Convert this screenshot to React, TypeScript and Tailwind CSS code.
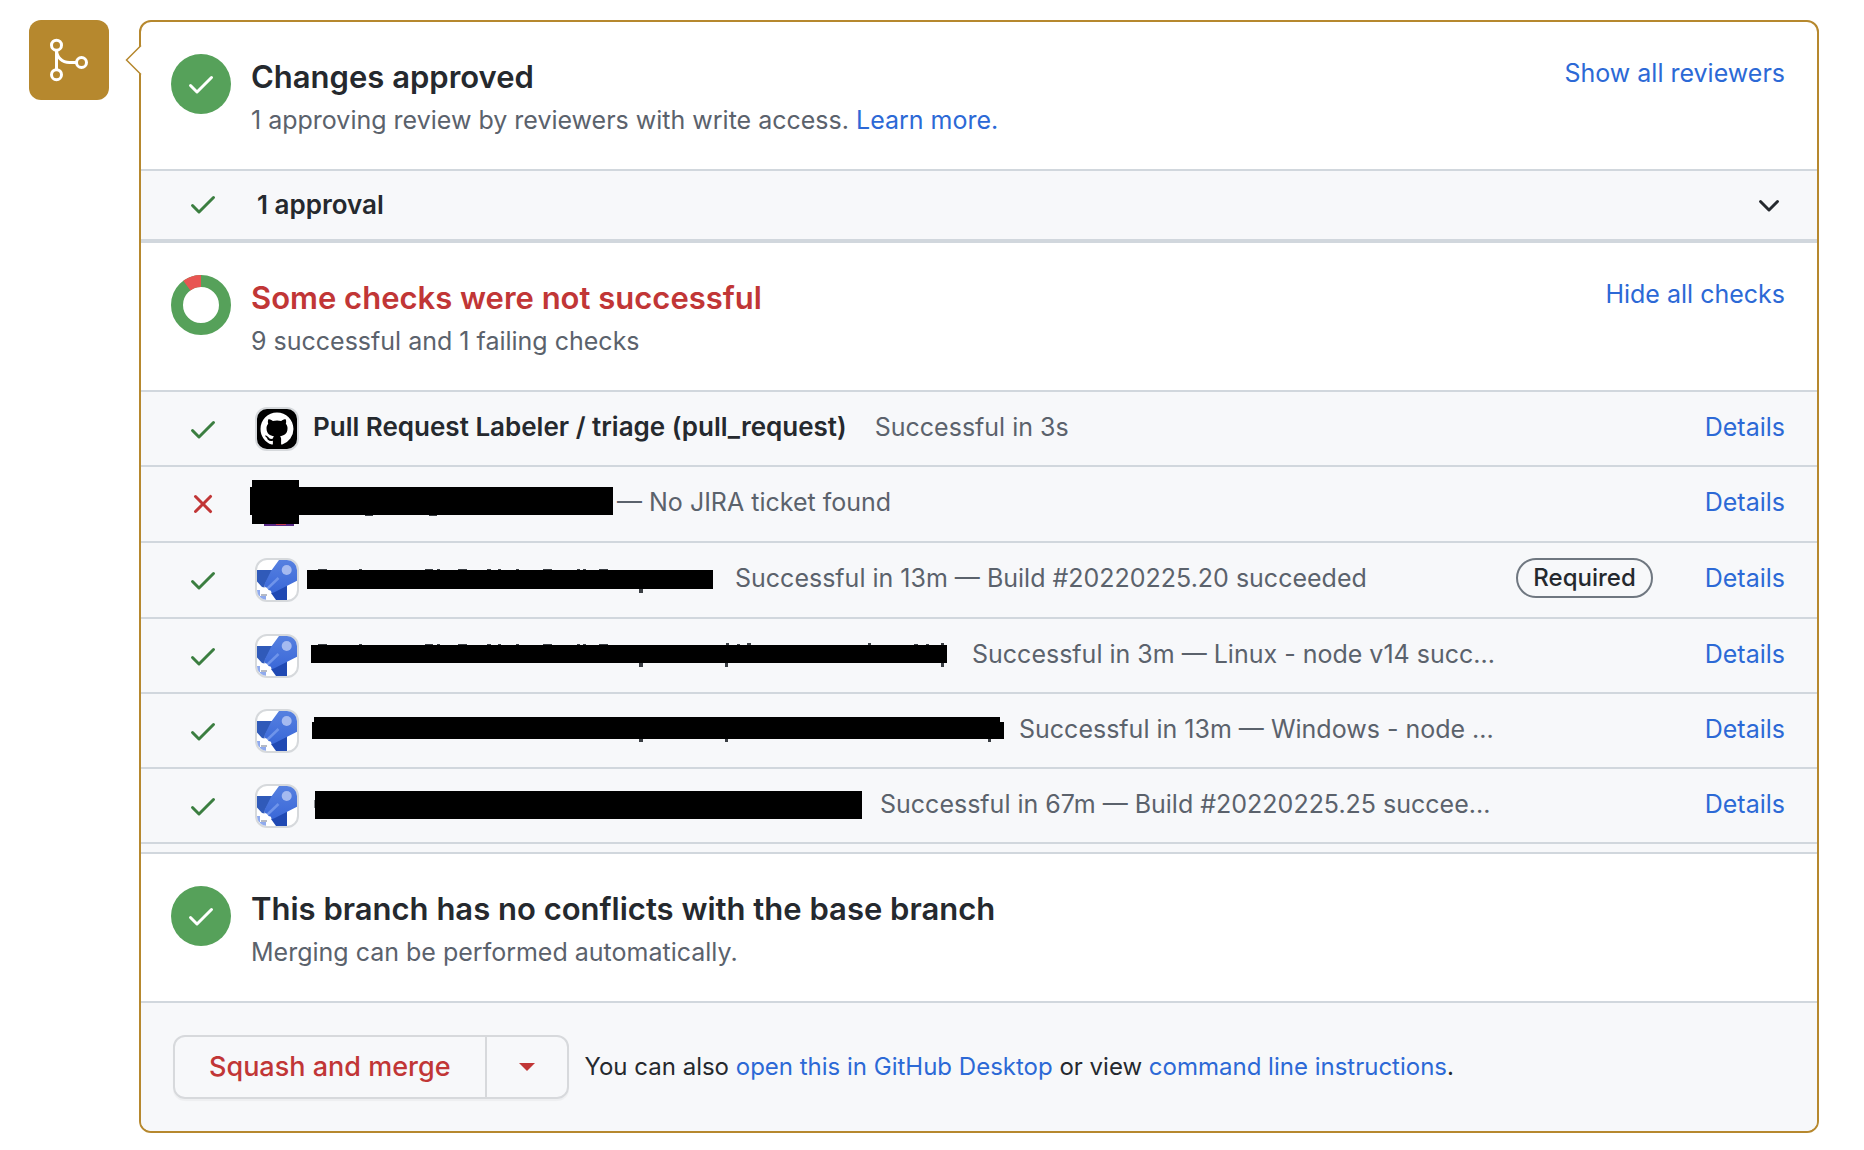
import type { ReactNode } from "react";

const CHECK =
  "M13.78 4.22a.75.75 0 010 1.06l-7.25 7.25a.75.75 0 01-1.06 0L2.22 9.28a.75.75 0 011.06-1.06L6 10.94l6.72-6.72a.75.75 0 011.06 0z";
const CROSS =
  "M3.72 3.72a.75.75 0 011.06 0L8 6.94l3.22-3.22a.75.75 0 111.06 1.06L9.06 8l3.22 3.22a.75.75 0 11-1.06 1.06L8 9.06l-3.22 3.22a.75.75 0 01-1.06-1.06L6.94 8 3.72 4.78a.75.75 0 010-1.06z";
const CHEVRON =
  "M12.78 6.22a.75.75 0 010 1.06l-4.25 4.25a.75.75 0 01-1.06 0L3.22 7.28a.75.75 0 011.06-1.06L8 9.94l3.72-3.72a.75.75 0 011.06 0z";
const GITHUB =
  "M8 0C3.58 0 0 3.58 0 8c0 3.54 2.29 6.53 5.47 7.59.4.07.55-.17.55-.38 0-.19-.01-.82-.01-1.49-2.01.37-2.53-.49-2.69-.94-.09-.23-.48-.94-.82-1.13-.28-.15-.68-.52-.01-.53.63-.01 1.08.58 1.23.82.72 1.21 1.87.87 2.33.66.07-.52.28-.87.51-1.07-1.78-.2-3.64-.89-3.64-3.95 0-.87.31-1.59.82-2.15-.08-.2-.36-1.02.08-2.12 0 0 .67-.21 2.2.82.64-.18 1.32-.27 2-.27.68 0 1.36.09 2 .27 1.53-1.04 2.2-.82 2.2-.82.44 1.1.16 1.92.08 2.12.51.56.82 1.27.82 2.15 0 3.07-1.87 3.75-3.65 3.95.29.25.54.73.54 1.48 0 1.07-.01 1.93-.01 2.2 0 .21.15.46.55.38A8.013 8.013 0 0016 8c0-4.42-3.58-8-8-8z";

function Octicon({ d, className }: { d: string; className: string }) {
  return (
    <svg viewBox="0 0 16 16" fill="currentColor" aria-hidden="true" className={`size-8 shrink-0 ${className}`}>
      <path d={d} />
    </svg>
  );
}

function MergeBadge() {
  return (
    <div className="size-20 shrink-0 rounded-xl bg-[#b6882e]">
      <svg viewBox="0 0 80 80" fill="none" stroke="#fff" strokeWidth="3" aria-hidden="true">
        <circle cx="27.5" cy="25.2" r="5" />
        <circle cx="27.5" cy="54.7" r="5" />
        <circle cx="52.5" cy="42.5" r="5" />
        <path d="M27.5 30v20M27.5 30c0 7 5.500 12.500 13 12.500h7" />
      </svg>
    </div>
  );
}

function SuccessCircle() {
  return (
    <div className="flex size-[60px] shrink-0 items-center justify-center rounded-full bg-[#56a15a]">
      <Octicon d={CHECK} className="text-white" />
    </div>
  );
}

function ChecksDonut() {
  return (
    <svg viewBox="0 0 60 60" fill="none" strokeWidth="12" aria-hidden="true" className="size-[60px] shrink-0">
      <circle cx="30" cy="30" r="24" stroke="#56a15a" />
      <path d="M15.890 10.580A24 24 0 0 1 30 6" stroke="#e85552" />
    </svg>
  );
}

function Section({
  icon,
  title,
  titleClass = "text-[#25292e]",
  action,
  children,
}: {
  icon: ReactNode;
  title: string;
  titleClass?: string;
  action?: string;
  children: ReactNode;
}) {
  return (
    <section className="flex items-start pt-8 pr-8 pb-7 pl-[30px]">
      {icon}
      <div className="ml-5 flex-1">
        <h3 className={`text-[31px] leading-[46px] font-semibold ${titleClass}`}>{title}</h3>
        <p className="text-[25px] leading-[41px] text-[#5b626c]">{children}</p>
      </div>
      {action && (
        <button type="button" className="text-[25px] leading-[38px] text-[#2c69d6]">
          {action}
        </button>
      )}
    </section>
  );
}

function Avatar({ kind }: { kind: "github" | "pipelines" }) {
  return (
    <span
      className={`ml-9 size-11 shrink-0 overflow-hidden rounded-xl border-2 border-[#d6d9dc] ${kind === "github" ? "bg-black" : "bg-white"}`}
    >
      {kind === "github" ? (
        <svg viewBox="0 0 40 40" aria-hidden="true">
          <path d={GITHUB} fill="#fff" transform="translate(3.5 3.5) scale(2.06)" />
        </svg>
      ) : (
        <svg viewBox="0 0 40 40" aria-hidden="true">
          <defs>
            <linearGradient id="rocket" x1="0" y1="0" x2="0" y2="1">
              <stop offset="0" stopColor="#5680e0" />
              <stop offset="1" stopColor="#3a68d8" />
            </linearGradient>
          </defs>
          <path d="M0 10h16L8 24l-.5 3.500L5 27 0 21.500z" fill="#305ab9" />
          <path d="M30 24v16H19l-5-7 4-3z" fill="#2049b3" />
          <path d="M22 0h18v20.700L17.400 32.300 15 33l-1.500-2.500-2-.5-1-2-2.500-1-.5-3L14 11z" fill="url(#rocket)" />
          <path d="M21.500 18L10.500 28.500" stroke="#6f94ea" strokeWidth="2.500" />
          <circle cx="29.700" cy="10" r="5" fill="#a5baf0" />
          <path d="M0 30h3v6h6v4H0z" fill="#8faaee" />
          <path d="M4 34h6v2H4z" fill="#b5bac4" />
          <path d="M0 36h3v4H0z" fill="#fff" />
        </svg>
      )}
    </span>
  );
}

type Rect = [x: number, y: number, w: number, h: number, fill?: string];

/* Blacked-out check name: opaque bars plus the slivers of lettering that stick out of them. */
function Redaction({ width, rects, className = "" }: { width: number; rects: Rect[]; className?: string }) {
  return (
    <svg
      width={width}
      height="46"
      viewBox={`0 0 ${width} 46`}
      shapeRendering="crispEdges"
      role="img"
      aria-label="Redacted check name"
      className={`-mt-0.5 shrink-0 ${className}`}
    >
      {rects.map(([x, y, w, h, fill = "#000"]) => (
        <rect key={`${x}-${y}`} x={x} y={y} width={w} height={h} fill={fill} />
      ))}
    </svg>
  );
}

const SLIVER = "#3a3e43";
const nameTops = (y: number): Rect[] =>
  [
    [19, 9],
    [60, 3],
    [126, 8],
    [138, 3],
    [159, 9],
    [188, 4],
    [199, 3],
    [217, 3],
    [244, 9],
    [278, 3],
    [284, 3],
    [300, 9],
  ].map(([x, w]) => [x, y, w, 1, SLIVER] as Rect);

type Check = {
  id: string;
  ok: boolean;
  tall?: boolean;
  avatar?: "github" | "pipelines";
  name: ReactNode;
  status: string;
  required?: boolean;
};

const checks: Check[] = [
  {
    id: "labeler",
    ok: true,
    avatar: "github",
    name: (
      <strong className="mr-7 ml-3.5 text-[26px] font-semibold text-[#25292e]">
        Pull Request Labeler / triage (pull_request)
      </strong>
    ),
    status: "Successful in 3s",
  },
  {
    id: "jira",
    ok: false,
    tall: true,
    name: (
      <Redaction
        width={367}
        className="ml-[31px]"
        rects={[
          [14, 44, 30, 2, "#5a2a86"],
          [26, 44, 10, 1, "#c23a55"],
          [0, 7, 363, 28],
          [2, 0, 47, 44],
          [115, 35, 8, 1, SLIVER],
          [179, 35, 8, 1, SLIVER],
        ]}
      />
    ),
    status: "— No JIRA ticket found",
  },
  {
    id: "build",
    ok: true,
    tall: true,
    avatar: "pipelines",
    name: <Redaction width={436} rects={[...nameTops(13), [8, 14, 406, 19], [340, 33, 4, 4, SLIVER]]} />,
    status: "Successful in 13m — Build #20220225.20 succeeded",
    required: true,
  },
  {
    id: "linux",
    ok: true,
    avatar: "pipelines",
    name: (
      <Redaction
        width={673}
        rects={[
          ...nameTops(12),
          [427, 11, 3, 2, SLIVER],
          [438, 12, 3, 1, SLIVER],
          [448, 11, 4, 2, SLIVER],
          [569, 11, 3, 2, SLIVER],
          [615, 12, 4, 1, SLIVER],
          [627, 12, 3, 1, SLIVER],
          [642, 11, 3, 2, SLIVER],
          [12, 13, 636, 18],
          [340, 31, 4, 4, SLIVER],
          [426, 31, 3, 4, SLIVER],
          [642, 31, 3, 4, SLIVER],
        ]}
      />
    ),
    status: "Successful in 3m — Linux - node v14 succ...",
  },
  {
    id: "windows",
    ok: true,
    avatar: "pipelines",
    name: (
      <Redaction
        width={720}
        rects={[
          [15, 10, 686, 5],
          [13, 15, 692, 17],
          [340, 32, 4, 3, SLIVER],
          [426, 32, 3, 3, SLIVER],
          [689, 32, 3, 3, SLIVER],
        ]}
      />
    ),
    status: "Successful in 13m — Windows - node ...",
  },
  {
    id: "full",
    ok: true,
    avatar: "pipelines",
    name: <Redaction width={581} rects={[[15, 18, 1, 8, "#8a8d91"], [16, 9, 547, 28]]} />,
    status: "Successful in 67m — Build #20220225.25 succee...",
  },
];

function CheckRow({ check }: { check: Check }) {
  return (
    <li
      className={`flex items-start border-b-2 border-[#d1d7dd] pt-[15px] pr-8 pl-[46px] text-[25px] leading-10 ${check.tall ? "h-[76px]" : "h-[75px]"}`}
    >
      <span className="flex h-11 items-center">
        <Octicon d={check.ok ? CHECK : CROSS} className={check.ok ? "text-[#3b7e40]" : "text-[#c13636]"} />
      </span>
      {check.avatar && <Avatar kind={check.avatar} />}
      {check.name}
      <span className="flex-1 whitespace-nowrap text-[#5b626c]">{check.status}</span>
      {check.required && (
        <span className="mr-[52px] rounded-full border-2 border-[#6f7780] px-[15px] text-[24px] leading-9 font-medium text-[#25292e]">
          Required
        </span>
      )}
      <a href="#details" className="text-[#2c69d6]">
        Details
      </a>
    </li>
  );
}

export default function App() {
  return (
    <main className="flex items-start bg-white pt-5 pr-[45px] pb-4 pl-[29px] font-['Inter',sans-serif]">
      <MergeBadge />
      <div className="relative ml-[30px] min-w-0 flex-1 rounded-xl border-2 border-[#b6882e] bg-white">
        <svg viewBox="0 0 18 32" className="absolute top-[22px] -left-4 h-8 w-[18px]" aria-hidden="true">
          <path d="M16 1.500h2v29h-2L1.500 16z" fill="#fff" />
          <path d="M16 1.500L1.500 16 16 30.500" fill="none" stroke="#b6882e" strokeWidth="1.500" />
        </svg>

        <Section icon={<SuccessCircle />} title="Changes approved" action="Show all reviewers">
          1 approving review by reviewers with write access.{" "}
          <a href="#learn-more" className="text-[#2c69d6]">
            Learn more.
          </a>
        </Section>

        <button
          type="button"
          className="flex w-full items-center border-t-2 border-b-4 border-[#d1d7dd] bg-[#f7f8fa] pt-3.5 pr-8 pb-4 pl-[46px] text-left text-[26px] leading-[38px] font-semibold text-[#25292e]"
        >
          <Octicon d={CHECK} className="text-[#3b7e40]" />
          <span className="ml-[38px] flex-1 pt-0.5 leading-9">1 approval</span>
          <Octicon d={CHEVRON} className="text-[#25292e]" />
        </button>

        <Section
          icon={<ChecksDonut />}
          title="Some checks were not successful"
          titleClass="text-[#c13636]"
          action="Hide all checks"
        >
          9 successful and 1 failing checks
        </Section>

        <ul className="border-y-2 border-[#d1d7dd] bg-[#f7f8fa] pb-2">
          {checks.map((check) => (
            <CheckRow key={check.id} check={check} />
          ))}
        </ul>

        <Section icon={<SuccessCircle />} title="This branch has no conflicts with the base branch">
          Merging can be performed automatically.
        </Section>

        <footer className="flex items-center rounded-b-[10px] border-t-2 border-[#d1d7dd] bg-[#f7f8fa] p-8">
          <div className="flex h-16 rounded-xl border-2 border-[#d7d9dc] shadow-[0_2px_1px_rgba(27,31,36,0.04)]">
            <button type="button" className="px-[34px] text-[27px] font-medium text-[#c13636]">
              Squash and merge
            </button>
            <button type="button" aria-label="Select merge method" className="border-l-2 border-[#d7d9dc] px-8">
              <svg viewBox="0 0 16 8" fill="#c13636" aria-hidden="true" className="h-2 w-4">
                <path d="M0 0h16L8 8z" />
              </svg>
            </button>
          </div>
          <p className="ml-4 text-[24px] leading-9 text-[#25292e]">
            You can also{" "}
            <a href="#desktop" className="text-[#2c69d6]">
              open this in GitHub Desktop
            </a>{" "}
            or view{" "}
            <a href="#cli" className="text-[#2c69d6]">
              command line instructions
            </a>
            .
          </p>
        </footer>
      </div>
    </main>
  );
}
